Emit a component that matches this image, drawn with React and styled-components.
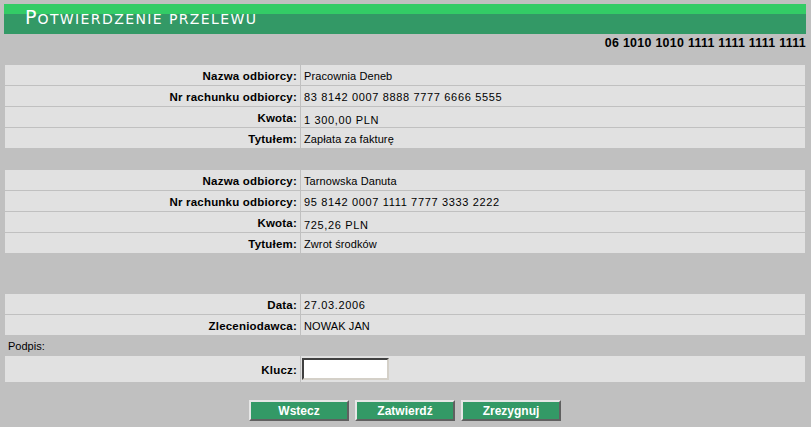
import React from 'react';
import styled, { createGlobalStyle } from 'styled-components';

const GlobalStyle = createGlobalStyle`
  html, body {
    margin: 0;
    padding: 0;
    background: #c0c0c0;
  }
  body {
    padding: 4px;
    font-family: "Liberation Sans", Arial, sans-serif;
    font-size: 11px;
    color: #000;
  }
`;

const TRANSFERS = [
  {
    name: 'Pracownia Deneb',
    account: '83 8142 0007 8888 7777 6666 5555',
    amount: '1 300,00 PLN',
    title: 'Zapłata za fakturę',
  },
  {
    name: 'Tarnowska Danuta',
    account: '95 8142 0007 1111 7777 3333 2222',
    amount: '725,26 PLN',
    title: 'Zwrot środków',
  },
];

const App = () => {
  return (
    <Page>
      <GlobalStyle />
      <Header>
        <Title>
          <BigLetter>P</BigLetter>OTWIERDZENIE PRZELEWU
        </Title>
      </Header>
      <AccountLine>06 1010 1010 1111 1111 1111 1111</AccountLine>

      {TRANSFERS.map((t, i) => (
        <Panel key={t.account} $gap={i === 0 ? 0 : 20}>
          <Row>
            <Label>Nazwa odbiorcy:</Label>
            <Value>{t.name}</Value>
          </Row>
          <Row>
            <Label>Nr rachunku odbiorcy:</Label>
            <Value $num>{t.account}</Value>
          </Row>
          <Row>
            <Label>Kwota:</Label>
            <Value $num $low>{t.amount}</Value>
          </Row>
          <Row>
            <Label>Tytułem:</Label>
            <Value>{t.title}</Value>
          </Row>
        </Panel>
      ))}

      <Panel $gap={39}>
        <Row>
          <Label>Data:</Label>
          <Value $num>27.03.2006</Value>
        </Row>
        <Row>
          <Label>Zleceniodawca:</Label>
          <Value>NOWAK JAN</Value>
        </Row>
      </Panel>

      <SignLine>Podpis:</SignLine>

      <Panel $gap={0}>
        <Row $tall>
          <Label>Klucz:</Label>
          <Value>
            <KeyInput type="password" />
          </Value>
        </Row>
      </Panel>

      <Buttons>
        <Button>Wstecz</Button>
        <Button>Zatwierdź</Button>
        <Button>Zrezygnuj</Button>
      </Buttons>
    </Page>
  );
};

const Page = styled.div`
  width: 802px;
  display: flex;
  flex-direction: column;
`;

const Header = styled.div`
  height: 30px;
  background: linear-gradient(#33cc66 0 10px, #339966 10px 100%);
  padding: 3px 0 0 21px;
  box-sizing: border-box;
`;

const Title = styled.div`
  font-family: "DejaVu Sans", Verdana, sans-serif;
  color: #fff;
  font-size: 14px;
  line-height: 20px;
  letter-spacing: 1.4px;
  white-space: nowrap;
`;

const BigLetter = styled.span`
  font-size: 19px;
  letter-spacing: 1px;
`;

const AccountLine = styled.div`
  margin-top: 1px;
  height: 16px;
  line-height: 16px;
  text-align: right;
  font-weight: bold;
  font-size: 12.4px;
  letter-spacing: 0.3px;
  margin-bottom: 13px;
`;

const Panel = styled.div`
  margin-top: ${(p) => p.$gap}px;
  display: grid;
  gap: 1px;
  padding: 1px;
`;

const Row = styled.div`
  display: grid;
  grid-template-columns: 295px 1fr;
  gap: 1px;
  height: ${(p) => (p.$tall ? 26 : 20)}px;
`;

const Cell = styled.div`
  background: #e1e1e1;
  display: flex;
  align-items: center;
  padding-top: 2px;
  box-sizing: border-box;
  white-space: nowrap;
`;

const Label = styled(Cell)`
  justify-content: flex-end;
  padding-right: 3px;
  font-weight: bold;
  font-size: 11.5px;
  letter-spacing: 0.2px;
`;

const Value = styled(Cell)`
  padding-left: 3px;
  padding-top: ${(p) => (p.$low ? 5 : 2)}px;
  letter-spacing: ${(p) => (p.$num ? '0.65px' : '0.1px')};
`;

const SignLine = styled.div`
  height: 19px;
  line-height: 18px;
  padding-left: 4px;
  padding-top: 1px;
  box-sizing: border-box;
`;

const KeyInput = styled.input`
  margin: -2px 0 0 -2px;
  width: 87px;
  height: 22px;
  box-sizing: border-box;
  background: #fff;
  border: 2px solid;
  border-color: #404040 #d4d0c8 #d4d0c8 #404040;
  outline: none;
`;

const Buttons = styled.div`
  margin-top: 17px;
  display: flex;
  justify-content: center;
  gap: 6px;
`;

const Button = styled.button`
  width: 100px;
  height: 21px;
  margin: 0;
  padding: 0;
  background: #339966;
  color: #fff;
  font-family: "Liberation Sans", Arial, sans-serif;
  font-weight: bold;
  font-size: 12px;
  border: 2px solid;
  border-color: #e6e6e6 #606060 #606060 #e6e6e6;
  box-sizing: border-box;
  cursor: pointer;
`;

export default App;
